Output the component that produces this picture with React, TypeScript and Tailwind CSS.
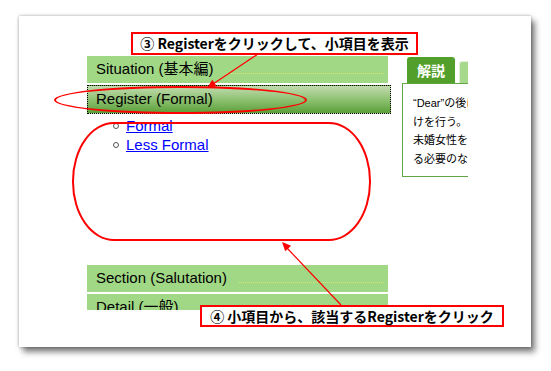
import React from "react";

const body = { fontFamily: '"Liberation Sans", "Noto Sans CJK JP", sans-serif' };
const note = { fontFamily: '"Noto Sans CJK JP", "Liberation Sans", sans-serif' };

function Bar({ label, className = "" }: { label: string; className?: string }) {
  return (
    <div className={`flex h-[27px] w-[301px] shrink-0 items-center bg-[#a0d886] pl-[9px] pr-[4px] text-[15px] text-black ${className}`}>
      <span className="whitespace-nowrap">{label}</span>
      <span className="ml-[12px] mt-[8px] h-0 flex-1 border-b border-dotted border-[#d6e86c]" />
    </div>
  );
}

export default function App() {
  return (
    <div className="relative h-[371px] w-[551px] overflow-hidden bg-white" style={body}>
      <div className="ml-[19px] mt-[16px] h-[331px] w-[512px] bg-white pl-[68px] pt-[40px] shadow-[0_0_3px_rgba(0,0,0,0.35),4px_5px_6px_rgba(0,0,0,0.5)]">
        <div className="flex">
          {/* left menu */}
          <div className="flex h-[254px] w-[304px] flex-col overflow-hidden">
            <Bar label="Situation (基本編)" />
            <div className="mt-[2px] flex h-[29px] w-[304px] shrink-0 items-center border border-dotted border-black bg-gradient-to-b from-[#c2dbb0] via-[#8fc272] to-[#5a9f36] pl-[8px] text-[15px] text-black">
              Register (Formal)
            </div>
            <ul className="pt-[2px] text-[15px] leading-[19px]">
              <li className="ml-[26px] flex items-center gap-[7px]">
                <span className="h-[6px] w-[6px] rounded-full border border-[#555]" />
                <a className="text-[#0000ff] underline">Formal</a>
              </li>
              <li className="ml-[26px] flex items-center gap-[7px]">
                <span className="h-[6px] w-[6px] rounded-full border border-[#555]" />
                <a className="text-[#0000ff] underline">Less Formal</a>
              </li>
            </ul>
            <div className="mt-[111px] flex flex-col gap-[2px]">
              <Bar label="Section (Salutation)" />
              <Bar label="Detail (一般)" />
            </div>
          </div>

          {/* right panel */}
          <div className="ml-[11px] h-[121px] w-[66px] overflow-hidden pt-[1px]">
            <div className="flex items-end gap-[4px] pl-[5px]">
              <div className="flex h-[26px] w-[48px] shrink-0 items-center justify-center rounded-t-[3px] bg-[#52a02b] text-[14px] font-bold text-white" style={note}>
                解説
              </div>
              <div className="h-[22px] w-[30px] shrink-0 rounded-t-[3px] border-l border-t border-[#e2f2d6] bg-[#a6d98c]" />
            </div>
            <div className="h-[94px] w-[140px] border border-[#62a543] pl-[10px] pt-[10px] text-[11px] leading-[18.5px] text-black">
              <div className="whitespace-nowrap">“Dear”の後に敬称と名前を付けて呼びか</div>
              <div className="whitespace-nowrap">けを行う。</div>
              <div className="whitespace-nowrap">未婚女性を表す敬称を使い分け</div>
              <div className="whitespace-nowrap">る必要のない敬称を使う。</div>
            </div>
          </div>
        </div>
      </div>

      {/* annotations */}
      <div className="absolute left-[54px] top-[86px] h-[28px] w-[253px] rounded-[50%] border-[2.5px] border-[#ff0000]" />
      <div className="absolute left-[72px] top-[122px] h-[119px] w-[299px] rounded-[42px_/_59px] border-[2.5px] border-[#ff0000]" />

      <svg className="pointer-events-none absolute left-0 top-0" width="551" height="371" viewBox="0 0 551 371">
        <line x1="258" y1="54" x2="213" y2="84" stroke="#ff0000" strokeWidth="1.2" />
        <polygon points="207,88 216.7,86.3 212.3,79.7" fill="#ff0000" />
        <line x1="341" y1="305" x2="287" y2="248" stroke="#ff0000" strokeWidth="1.2" />
        <polygon points="282,242 291.1,245.8 285.2,251.3" fill="#ff0000" />
      </svg>

      <div className="absolute left-[131px] top-[32px] flex h-[23px] w-[287px] items-center justify-center border-2 border-[#ff0000] bg-white text-[14px] font-bold text-black" style={note}>
        ③ Registerをクリックして、小項目を表示
      </div>
      <div className="absolute left-[200px] top-[305px] flex h-[22px] w-[304px] items-center justify-center border-2 border-[#ff0000] bg-white text-[14px] font-bold text-black" style={note}>
        ④ 小項目から、該当するRegisterをクリック
      </div>
    </div>
  );
}
